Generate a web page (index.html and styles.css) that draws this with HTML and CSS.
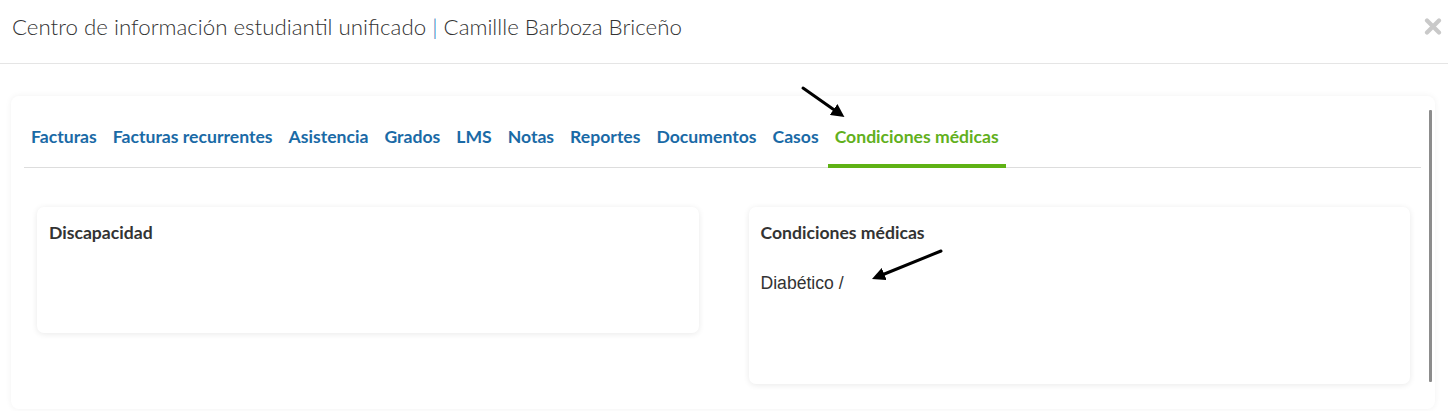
FILE: index.html
```html
<!DOCTYPE html>
<html lang="es">
<head>
<meta charset="utf-8">
<title>Centro de información estudiantil unificado</title>
<link rel="stylesheet" href="styles.css">
</head>
<body>
<header class="modal-header">
  <h1 class="modal-title">Centro de información estudiantil unificado <span class="sep">|</span> Camillle Barboza Briceño</h1>
  <button class="close" aria-label="Cerrar">
    <svg width="18" height="17" viewBox="0 0 18 17"><path d="M3 2.5 L15 14.5 M15 2.5 L3 14.5" stroke="#c9c9c9" stroke-width="4.2" stroke-linecap="round"/></svg>
  </button>
</header>
<main class="panel">
  <nav class="tabs">
    <a class="tab">Facturas</a>
    <a class="tab">Facturas recurrentes</a>
    <a class="tab">Asistencia</a>
    <a class="tab">Grados</a>
    <a class="tab">LMS</a>
    <a class="tab">Notas</a>
    <a class="tab">Reportes</a>
    <a class="tab">Documentos</a>
    <a class="tab">Casos</a>
    <a class="tab active">Condiciones médicas</a>
  </nav>
  <div class="row">
    <section class="card card-short">
      <h2 class="card-title">Discapacidad</h2>
    </section>
    <section class="card">
      <h2 class="card-title">Condiciones médicas</h2>
      <p class="card-text">Diabético /</p>
    </section>
  </div>
  <div class="scrollbar"></div>
</main>
<svg class="annot" width="1448" height="411" viewBox="0 0 1448 411">
  <defs>
    <marker id="ah" markerWidth="4.4" markerHeight="4.4" refX="2.6" refY="2.2" orient="auto" markerUnits="strokeWidth">
      <path d="M0 0 L4.4 2.2 L0 4.4 Z" fill="#000"/>
    </marker>
  </defs>
  <line x1="803" y1="88" x2="840" y2="114" stroke="#000" stroke-width="3" stroke-linecap="round" marker-end="url(#ah)"/>
  <line x1="941" y1="251" x2="877" y2="277" stroke="#000" stroke-width="3" stroke-linecap="round" marker-end="url(#ah)"/>
</svg>
</body>
</html>
```
FILE: styles.css
```css
html, body {
  margin: 0;
  padding: 0;
  background: #fff;
}
body {
  font-family: Lato, "Open Sans", sans-serif;
  color: #333;
  position: relative;
  width: 1448px;
  height: 411px;
  overflow: hidden;
}
.modal-header {
  box-sizing: border-box;
  height: 64px;
  border-bottom: 1px solid #e5e5e5;
  padding: 14px 6px 0 12px;
  display: flex;
  justify-content: space-between;
  align-items: flex-start;
}
.modal-title {
  margin: 0;
  font-size: 22.3px;
  line-height: 26px;
  font-weight: 300;
  color: #333;
}
.sep {
  color: #1f74b8;
}
.close {
  border: 0;
  background: none;
  padding: 0;
  margin-top: 4px;
  line-height: 0;
}
.panel {
  position: relative;
  margin: 32px 13px 0 11px;
  padding: 14px 14px 25px 13px;
  border-radius: 8px;
  box-shadow: 0 0 6px rgba(0, 0, 0, 0.06);
  background: #fff;
}
.tabs {
  display: flex;
  border-bottom: 1px solid #dddddd;
}
.tab {
  font-size: 17.6px;
  line-height: 22px;
  font-weight: 700;
  color: #1a6aa6;
  padding: 16px 7px 16px 7px;
  margin-right: 2px;
  border-bottom: 4px solid transparent;
  margin-bottom: -1px;
}
.tab.active {
  color: #62b01d;
  border-bottom-color: #5fb215;
}
.row {
  display: flex;
  gap: 50px;
  margin-top: 39px;
  padding: 0 11px 0 13px;
  align-items: flex-start;
}
.card {
  flex: 1;
  box-sizing: border-box;
  border-radius: 7px;
  box-shadow: 0 1px 6px rgba(0, 0, 0, 0.09);
  padding: 15px 12px 15px 12px;
  background: #fff;
}
.card-short {
  min-height: 126px;
}
.card-title {
  margin: 0;
  font-size: 17.6px;
  line-height: 22px;
  font-weight: 700;
  color: #333;
}
.card-text {
  margin: 28px 0 75px 0;
  font-family: "Liberation Sans", Arial, sans-serif;
  font-size: 17.6px;
  line-height: 22px;
  color: #333;
}
.scrollbar {
  position: absolute;
  top: 14px;
  right: 3px;
  width: 3px;
  height: 272px;
  background: #8c8c8c;
  border-radius: 1px;
}
.annot {
  position: absolute;
  left: 0;
  top: 0;
  pointer-events: none;
}
```
